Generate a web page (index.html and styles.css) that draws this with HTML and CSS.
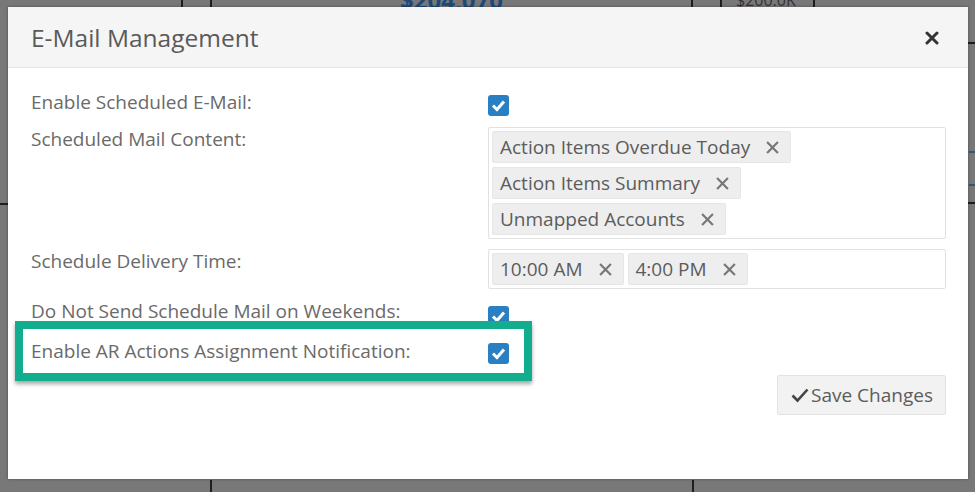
FILE: index.html
```html
<!DOCTYPE html>
<html>
<head>
<meta charset="utf-8">
<link rel="stylesheet" href="styles.css">
</head>
<body>
<div class="backdrop">
  <div class="bg-line v" style="left:181px;top:0;height:8px"></div>
  <div class="bg-line v" style="left:210px;top:0;height:8px"></div>
  <div class="bg-amount">$204,070</div>
  <div class="bg-line v" style="left:691px;top:0;height:8px"></div>
  <div class="bg-line v" style="left:720px;top:0;height:8px"></div>
  <div class="bg-cell">$200.0K</div>
  <div class="bg-line v" style="left:813px;top:0;height:8px"></div>
  <div class="bg-line h" style="left:0;top:203px;width:8px"></div>
  <div class="bg-line h" style="left:968px;top:42px;width:7px"></div>
  <div class="bg-line h" style="left:968px;top:202px;width:7px"></div>
  <div class="bg-blue" style="left:969px;top:151px"></div>
  <div class="bg-blue" style="left:969px;top:184px"></div>
  <div class="bg-line v" style="left:210px;top:480px;height:12px"></div>
  <div class="bg-line v" style="left:692px;top:480px;height:12px"></div>
</div>

<div class="modal">
  <div class="modal-header">
    <h4 class="modal-title">E-Mail Management</h4>
    <svg class="close" width="14" height="14" viewBox="0 0 14 14"><path d="M2 2L12 12M12 2L2 12" stroke="#333" stroke-width="3" stroke-linecap="round"/></svg>
  </div>
  <div class="modal-body">
    <div class="row r1">
      <label class="lbl">Enable Scheduled E-Mail:</label>
      <div class="ctl"><span class="cb"><svg width="21" height="21" viewBox="0 0 21 21"><path d="M5 10.5L9 14.5L16 6.5" fill="none" stroke="#fff" stroke-width="3"/></svg></span></div>
    </div>
    <div class="row r2">
      <label class="lbl">Scheduled Mail Content:</label>
      <div class="ctl">
        <div class="tagbox">
          <span class="tag">Action Items Overdue Today<svg class="x" viewBox="0 0 12 12"><path d="M1 1L11 11M11 1L1 11" stroke="#777" stroke-width="2"/></svg></span>
          <span class="tag">Action Items Summary<svg class="x" viewBox="0 0 12 12"><path d="M1 1L11 11M11 1L1 11" stroke="#777" stroke-width="2"/></svg></span>
          <span class="tag">Unmapped Accounts<svg class="x" viewBox="0 0 12 12"><path d="M1 1L11 11M11 1L1 11" stroke="#777" stroke-width="2"/></svg></span>
        </div>
      </div>
    </div>
    <div class="row r3">
      <label class="lbl">Schedule Delivery Time:</label>
      <div class="ctl">
        <div class="tagbox">
          <span class="tag">10:00 AM<svg class="x" viewBox="0 0 12 12"><path d="M1 1L11 11M11 1L1 11" stroke="#777" stroke-width="2"/></svg></span>
          <span class="tag">4:00 PM<svg class="x" viewBox="0 0 12 12"><path d="M1 1L11 11M11 1L1 11" stroke="#777" stroke-width="2"/></svg></span>
        </div>
      </div>
    </div>
    <div class="row r4">
      <label class="lbl">Do Not Send Schedule Mail on Weekends:</label>
      <div class="ctl"><span class="cb"><svg width="21" height="21" viewBox="0 0 21 21"><path d="M5 10.5L9 14.5L16 6.5" fill="none" stroke="#fff" stroke-width="3"/></svg></span></div>
    </div>
    <div class="row r5">
      <label class="lbl">Enable AR Actions Assignment Notification:</label>
      <div class="ctl"><span class="cb"><svg width="21" height="21" viewBox="0 0 21 21"><path d="M5 10.5L9 14.5L16 6.5" fill="none" stroke="#fff" stroke-width="3"/></svg></span></div>
      <div class="highlight"></div>
    </div>
    <div class="footer">
      <button class="btn"><svg width="18" height="16" viewBox="0 0 18 16"><path d="M1.5 8.5L6.5 13.5L16.5 2.5" fill="none" stroke="#444" stroke-width="2.6"/></svg>Save Changes</button>
    </div>
  </div>
</div>
</body>
</html>
```

FILE: styles.css
```css
html, body {
  margin: 0;
  padding: 0;
}
body {
  width: 975px;
  height: 492px;
  background: #787878;
  position: relative;
  overflow: hidden;
  font-family: "Open Sans", "Noto Sans", sans-serif;
}
.backdrop {
  position: absolute;
  inset: 0;
}
.bg-line {
  position: absolute;
  background: #1e1e1e;
}
.bg-line.v { width: 2px; }
.bg-line.h { height: 2px; }
.bg-blue {
  position: absolute;
  width: 6px;
  height: 2px;
  background: #2d5688;
}
.bg-amount {
  position: absolute;
  left: 400px;
  top: -14px;
  font-size: 24px;
  line-height: 28px;
  font-weight: bold;
  color: #1d4a7a;
}
.bg-cell {
  position: absolute;
  left: 736px;
  top: -10px;
  font-size: 16px;
  line-height: 20px;
  color: #333;
}
.modal {
  position: absolute;
  left: 8px;
  top: 7px;
  width: 960px;
  height: 472px;
  background: #fff;
  box-shadow: 0 0 3px rgba(0,0,0,.35);
  display: flex;
  flex-direction: column;
}
.modal-header {
  height: 60px;
  background: #f5f5f5;
  border-bottom: 1px solid #e3e3e3;
  display: flex;
  align-items: center;
  justify-content: space-between;
  padding: 0 29px 0 23px;
}
.modal-title {
  margin: 0;
  font-size: 24.5px;
  font-weight: normal;
  color: #5a5a5a;
}
.close { margin-top: 2px; }
.modal-body {
  padding: 22px 22px 0 23px;
}
.row {
  display: grid;
  grid-template-columns: 457px 458px;
  position: relative;
}
.lbl {
  font-size: 19px;
  line-height: 24px;
  color: #6a6a6a;
  white-space: nowrap;
}
.r1 { height: 37px; }
.r2 { height: 122px; }
.r3 { height: 50px; }
.r4 { height: 40px; }
.r5 { height: 36px; }
.cb {
  display: block;
  width: 21px;
  height: 21px;
  margin-top: 5px;
  border-radius: 3px;
  background: #2a7fc2;
}
.cb svg { display: block; }
.r4 .cb { margin-top: 7px; }
.r5 .cb { margin-top: 4px; }
.tagbox {
  border: 1px solid #e1e1e1;
  border-radius: 2px;
  padding: 3px;
  display: flex;
  flex-wrap: wrap;
  gap: 4px;
}
.r2 .tagbox { min-height: 103px; }
.tag {
  display: inline-flex;
  align-items: center;
  height: 32px;
  padding: 0 11px 0 7px;
  background: #eee;
  border: 1px solid #e6e6e6;
  border-radius: 2px;
  box-sizing: border-box;
  font-size: 19px;
  color: #5c5c5c;
}
.tag .x {
  width: 13px;
  height: 13px;
  margin-left: 16px;
}
.highlight {
  position: absolute;
  left: -16px;
  top: -18px;
  width: 501px;
  height: 44px;
  border: 8px solid #12ad8d;
  box-shadow: 0 3px 4px rgba(0,0,0,.35);
  pointer-events: none;
}
.footer {
  display: flex;
  justify-content: flex-end;
}
.btn {
  height: 40px;
  width: 169px;
  background: #f2f2f2;
  border: 1px solid #e2e2e2;
  border-radius: 2px;
  font-family: "Open Sans", "Noto Sans", sans-serif;
  font-size: 19px;
  color: #5c5c5c;
  display: flex;
  align-items: center;
  padding: 0 0 0 13px;
}
.btn svg { margin-right: 2px; }
```
